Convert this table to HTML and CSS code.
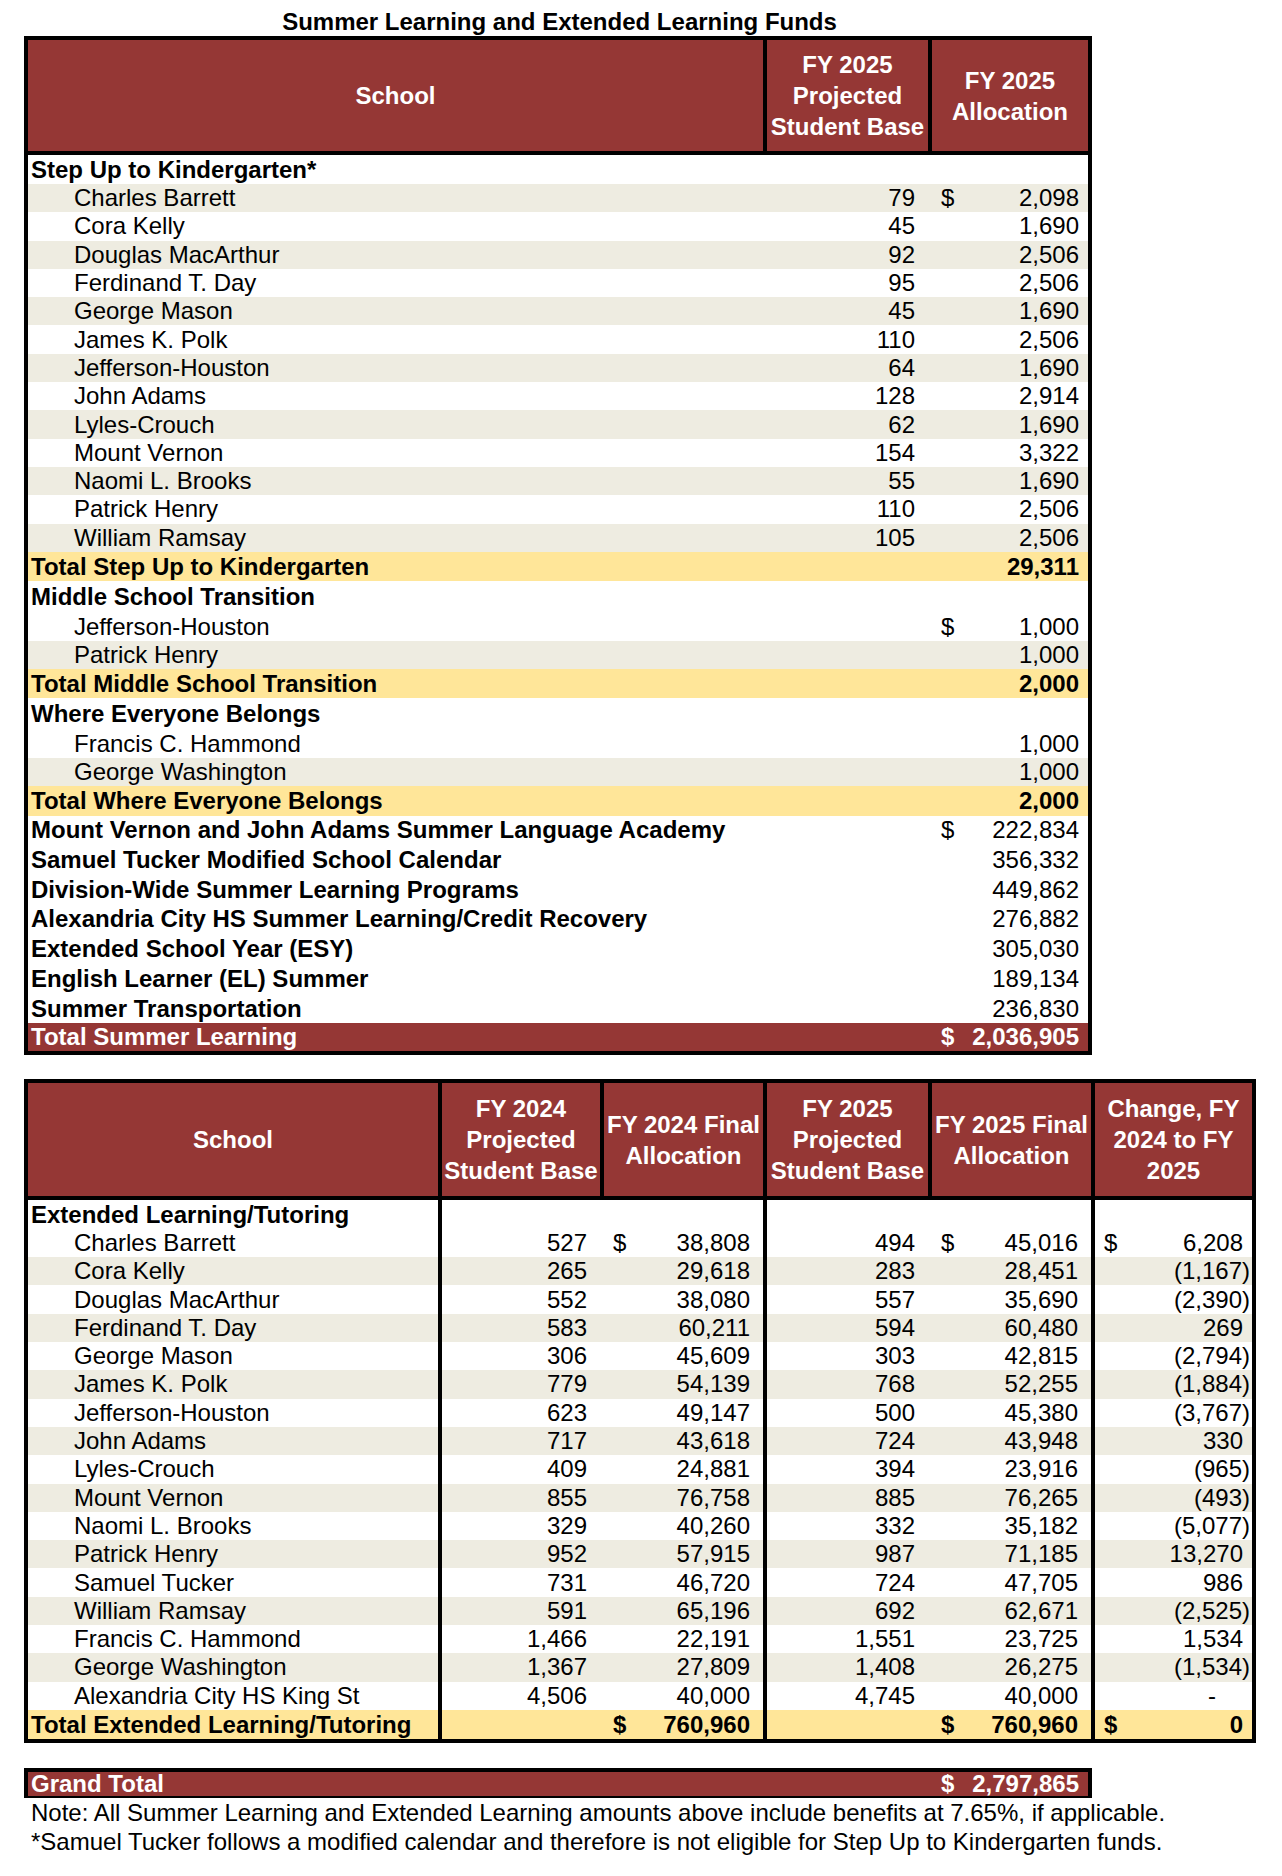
FILE: index.html
```html
<!DOCTYPE html>
<html>
<head>
<meta charset="utf-8">
<link rel="stylesheet" href="styles.css">
</head>
<body>
<div class="page">
  <div class="title">Summer Learning and Extended Learning Funds</div>
  <table class="t t1">
    <thead>
      <tr>
        <th class="w1-school">School</th>
        <th class="w1-b bl">FY 2025<br>Projected<br>Student Base</th>
        <th class="w1-c bl">FY 2025<br>Allocation</th>
      </tr>
    </thead>
    <tbody>
      <tr class="cat first"><td>Step Up to Kindergarten*</td><td></td><td></td></tr>
      <tr class="s"><td class="nm">Charles Barrett</td><td class="n">79</td><td class="a last"><div class="acct"><span>$</span><span>2,098</span></div></td></tr>
      <tr><td class="nm">Cora Kelly</td><td class="n">45</td><td class="n last">1,690</td></tr>
      <tr class="s"><td class="nm">Douglas MacArthur</td><td class="n">92</td><td class="n last">2,506</td></tr>
      <tr><td class="nm">Ferdinand T. Day</td><td class="n">95</td><td class="n last">2,506</td></tr>
      <tr class="s"><td class="nm">George Mason</td><td class="n">45</td><td class="n last">1,690</td></tr>
      <tr><td class="nm">James K. Polk</td><td class="n">110</td><td class="n last">2,506</td></tr>
      <tr class="s"><td class="nm">Jefferson-Houston</td><td class="n">64</td><td class="n last">1,690</td></tr>
      <tr><td class="nm">John Adams</td><td class="n">128</td><td class="n last">2,914</td></tr>
      <tr class="s"><td class="nm">Lyles-Crouch</td><td class="n">62</td><td class="n last">1,690</td></tr>
      <tr><td class="nm">Mount Vernon</td><td class="n">154</td><td class="n last">3,322</td></tr>
      <tr class="s"><td class="nm">Naomi L. Brooks</td><td class="n">55</td><td class="n last">1,690</td></tr>
      <tr><td class="nm">Patrick Henry</td><td class="n">110</td><td class="n last">2,506</td></tr>
      <tr class="s"><td class="nm">William Ramsay</td><td class="n">105</td><td class="n last">2,506</td></tr>
      <tr class="tot"><td>Total Step Up to Kindergarten</td><td></td><td class="n last">29,311</td></tr>
      <tr class="cat"><td>Middle School Transition</td><td></td><td></td></tr>
      <tr><td class="nm">Jefferson-Houston</td><td></td><td class="a last"><div class="acct"><span>$</span><span>1,000</span></div></td></tr>
      <tr class="s"><td class="nm">Patrick Henry</td><td></td><td class="n last">1,000</td></tr>
      <tr class="tot"><td>Total Middle School Transition</td><td></td><td class="n last">2,000</td></tr>
      <tr class="cat"><td>Where Everyone Belongs</td><td></td><td></td></tr>
      <tr><td class="nm">Francis C. Hammond</td><td></td><td class="n last">1,000</td></tr>
      <tr class="s"><td class="nm">George Washington</td><td></td><td class="n last">1,000</td></tr>
      <tr class="tot"><td>Total Where Everyone Belongs</td><td></td><td class="n last">2,000</td></tr>
      <tr class="prog"><td>Mount Vernon and John Adams Summer Language Academy</td><td></td><td class="a last"><div class="acct"><span>$</span><span>222,834</span></div></td></tr>
      <tr class="prog"><td>Samuel Tucker Modified School Calendar</td><td></td><td class="n last">356,332</td></tr>
      <tr class="prog"><td>Division-Wide Summer Learning Programs</td><td></td><td class="n last">449,862</td></tr>
      <tr class="prog"><td>Alexandria City HS Summer Learning/Credit Recovery</td><td></td><td class="n last">276,882</td></tr>
      <tr class="prog"><td>Extended School Year (ESY)</td><td></td><td class="n last">305,030</td></tr>
      <tr class="prog"><td>English Learner (EL) Summer</td><td></td><td class="n last">189,134</td></tr>
      <tr class="prog"><td>Summer Transportation</td><td></td><td class="n last">236,830</td></tr>
      <tr class="grand"><td>Total Summer Learning</td><td></td><td class="a last"><div class="acct"><span>$</span><span>2,036,905</span></div></td></tr>
    </tbody>
  </table>

  <table class="t t2">
    <thead>
      <tr>
        <th class="w2-school">School</th>
        <th class="w2-b bl">FY 2024<br>Projected<br>Student Base</th>
        <th class="w2-c bl">FY 2024 Final<br>Allocation</th>
        <th class="w2-d bl">FY 2025<br>Projected<br>Student Base</th>
        <th class="w2-e bl">FY 2025 Final<br>Allocation</th>
        <th class="w2-f bl">Change, FY<br>2024 to FY<br>2025</th>
      </tr>
    </thead>
    <tbody>
      <tr class="cat first"><td>Extended Learning/Tutoring</td><td class="bl"></td><td></td><td class="bl"></td><td></td><td class="bl"></td></tr>
      <tr><td class="nm">Charles Barrett</td><td class="n bl">527</td><td class="a"><div class="acct"><span>$</span><span>38,808</span></div></td><td class="n bl">494</td><td class="a"><div class="acct"><span>$</span><span>45,016</span></div></td><td class="a bl last"><div class="acct"><span>$</span><span>6,208</span></div></td></tr>
      <tr class="s"><td class="nm">Cora Kelly</td><td class="n bl">265</td><td class="n">29,618</td><td class="n bl">283</td><td class="n">28,451</td><td class="n bl last"><span class="neg">(1,167)</span></td></tr>
      <tr><td class="nm">Douglas MacArthur</td><td class="n bl">552</td><td class="n">38,080</td><td class="n bl">557</td><td class="n">35,690</td><td class="n bl last"><span class="neg">(2,390)</span></td></tr>
      <tr class="s"><td class="nm">Ferdinand T. Day</td><td class="n bl">583</td><td class="n">60,211</td><td class="n bl">594</td><td class="n">60,480</td><td class="n bl last">269</td></tr>
      <tr><td class="nm">George Mason</td><td class="n bl">306</td><td class="n">45,609</td><td class="n bl">303</td><td class="n">42,815</td><td class="n bl last"><span class="neg">(2,794)</span></td></tr>
      <tr class="s"><td class="nm">James K. Polk</td><td class="n bl">779</td><td class="n">54,139</td><td class="n bl">768</td><td class="n">52,255</td><td class="n bl last"><span class="neg">(1,884)</span></td></tr>
      <tr><td class="nm">Jefferson-Houston</td><td class="n bl">623</td><td class="n">49,147</td><td class="n bl">500</td><td class="n">45,380</td><td class="n bl last"><span class="neg">(3,767)</span></td></tr>
      <tr class="s"><td class="nm">John Adams</td><td class="n bl">717</td><td class="n">43,618</td><td class="n bl">724</td><td class="n">43,948</td><td class="n bl last">330</td></tr>
      <tr><td class="nm">Lyles-Crouch</td><td class="n bl">409</td><td class="n">24,881</td><td class="n bl">394</td><td class="n">23,916</td><td class="n bl last"><span class="neg">(965)</span></td></tr>
      <tr class="s"><td class="nm">Mount Vernon</td><td class="n bl">855</td><td class="n">76,758</td><td class="n bl">885</td><td class="n">76,265</td><td class="n bl last"><span class="neg">(493)</span></td></tr>
      <tr><td class="nm">Naomi L. Brooks</td><td class="n bl">329</td><td class="n">40,260</td><td class="n bl">332</td><td class="n">35,182</td><td class="n bl last"><span class="neg">(5,077)</span></td></tr>
      <tr class="s"><td class="nm">Patrick Henry</td><td class="n bl">952</td><td class="n">57,915</td><td class="n bl">987</td><td class="n">71,185</td><td class="n bl last">13,270</td></tr>
      <tr><td class="nm">Samuel Tucker</td><td class="n bl">731</td><td class="n">46,720</td><td class="n bl">724</td><td class="n">47,705</td><td class="n bl last">986</td></tr>
      <tr class="s"><td class="nm">William Ramsay</td><td class="n bl">591</td><td class="n">65,196</td><td class="n bl">692</td><td class="n">62,671</td><td class="n bl last"><span class="neg">(2,525)</span></td></tr>
      <tr><td class="nm">Francis C. Hammond</td><td class="n bl">1,466</td><td class="n">22,191</td><td class="n bl">1,551</td><td class="n">23,725</td><td class="n bl last">1,534</td></tr>
      <tr class="s"><td class="nm">George Washington</td><td class="n bl">1,367</td><td class="n">27,809</td><td class="n bl">1,408</td><td class="n">26,275</td><td class="n bl last"><span class="neg">(1,534)</span></td></tr>
      <tr><td class="nm">Alexandria City HS King St</td><td class="n bl">4,506</td><td class="n">40,000</td><td class="n bl">4,745</td><td class="n">40,000</td><td class="n bl last"><span class="dash">-</span></td></tr>
      <tr class="tot"><td>Total Extended Learning/Tutoring</td><td class="bl"></td><td class="a"><div class="acct"><span>$</span><span>760,960</span></div></td><td class="bl"></td><td class="a"><div class="acct"><span>$</span><span>760,960</span></div></td><td class="a bl last"><div class="acct"><span>$</span><span>0</span></div></td></tr>
    </tbody>
  </table>

  <div class="gt">
    <div class="gt-label">Grand Total</div>
    <div class="gt-val"><span>$</span><span>2,797,865</span></div>
  </div>
  <div class="notes">
    <div>Note: All Summer Learning and Extended Learning amounts above include benefits at 7.65%, if applicable.</div>
    <div>*Samuel Tucker follows a modified calendar and therefore is not eligible for Step Up to Kindergarten funds.</div>
  </div>
</div>
</body>
</html>
```

FILE: styles.css
```css
html, body {
  margin: 0;
  padding: 0;
  background: #ffffff;
}

body {
  font-family: "Liberation Sans", Arial, sans-serif;
  font-size: 24px;
  color: #000000;
}

.page {
  padding: 8px 0 0 24px;
  width: 1240px;
}

.title {
  width: 1068px;
  height: 28px;
  line-height: 28px;
  text-align: center;
  font-weight: bold;
  padding-left: 3px;
  box-sizing: border-box;
}

.t {
  box-sizing: border-box;
  border-collapse: separate;
  border-spacing: 0;
  border: 4px solid #000000;
  table-layout: fixed;
}

.t1 { width: 1068px; }
.t2 { width: 1232px; margin-top: 24px; }

.t th,
.t td {
  box-sizing: border-box;
  padding: 0;
  white-space: nowrap;
}

.t th {
  background: #953735;
  color: #ffffff;
  font-weight: bold;
  text-align: center;
  vertical-align: middle;
  line-height: 31px;
  border-bottom: 4px solid #000000;
}

.t1 th { height: 115px; }
.t2 th { height: 117px; }

.w1-school { width: 735px; }
.w1-b { width: 165px; }
.w1-c { width: 160px; }

.w2-school { width: 410px; }
.w2-b { width: 162px; }
.w2-c { width: 163px; }
.w2-d { width: 165px; }
.w2-e { width: 163px; }
.w2-f { width: 161px; }

.t .bl { border-left: 4px solid #000000; }

.t td {
  height: 28.3px;
  line-height: 28px;
  padding: 0 13px 0 3px;
  vertical-align: middle;
}

.t td.nm { padding-left: 46px; }
.t td.n { text-align: right; }
.t td.a { padding-left: 13px; }
.t td.last { padding-right: 9px; }
.t td.bl.last { padding-left: 9px; }

.acct {
  display: flex;
  justify-content: space-between;
}

.neg { margin-right: -7px; }
.dash { margin-right: 27px; }

.t tr.s td { background: #eeece1; }

.t tr.cat td { font-weight: bold; height: 31px; }
.t tr.cat.first td { height: 29px; }
.t2 tr.cat.first td { height: 28.5px; }

.t tr.tot td {
  background: #ffe699;
  font-weight: bold;
  height: 29.5px;
}

.t tr.prog td { font-weight: bold; height: 29.7px; }
.t tr.prog td.n,
.t tr.prog td.a { font-weight: normal; }

.t tr.grand td {
  background: #953735;
  color: #ffffff;
  font-weight: bold;
  height: 28px;
}

.gt {
  box-sizing: border-box;
  width: 1068px;
  height: 30px;
  margin-top: 25px;
  display: flex;
  background: #953735;
  color: #ffffff;
  font-weight: bold;
  border-style: solid;
  border-color: #000000;
  border-width: 4px 4px 2px 4px;
  line-height: 24px;
}

.gt-label {
  flex: 1;
  padding-left: 3px;
}

.gt-val {
  width: 160px;
  box-sizing: border-box;
  padding: 0 9px 0 13px;
  display: flex;
  justify-content: space-between;
}

.notes {
  padding-left: 7px;
  line-height: 29px;
}
```
